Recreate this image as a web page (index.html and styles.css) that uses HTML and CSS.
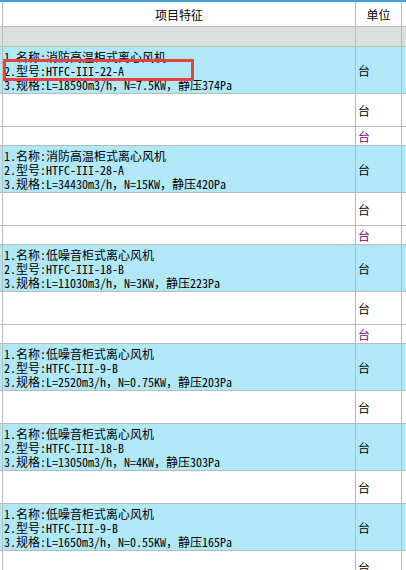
FILE: index.html
```html
<!DOCTYPE html>
<html lang="zh-CN">
<head>
<meta charset="utf-8">
<link rel="stylesheet" href="styles.css">
</head>
<body>
<div class="sheet">
  <div class="topbar"></div>
  <div class="row head">
    <div class="c1 center">项目特征</div>
    <div class="c2 center">单位</div>
  </div>
  <div class="row filter">
    <div class="c1"></div>
    <div class="c2"></div>
  </div>

  <div class="row item">
    <div class="c1 desc">
      <div class="line">1.名称:消防高温柜式离心风机</div>
      <div class="line mark">2.型号:HTFC-III-22-A</div>
      <div class="line">3.规格:L=18590m3/h，N=7.5KW，静压374Pa</div>
    </div>
    <div class="c2">台</div>
  </div>
  <div class="row sub"><div class="c1"></div><div class="c2">台</div></div>
  <div class="row small"><div class="c1"></div><div class="c2 purple">台</div></div>

  <div class="row item">
    <div class="c1 desc">
      <div class="line">1.名称:消防高温柜式离心风机</div>
      <div class="line">2.型号:HTFC-III-28-A</div>
      <div class="line">3.规格:L=34430m3/h，N=15KW，静压420Pa</div>
    </div>
    <div class="c2">台</div>
  </div>
  <div class="row sub"><div class="c1"></div><div class="c2">台</div></div>
  <div class="row small"><div class="c1"></div><div class="c2 purple">台</div></div>

  <div class="row item">
    <div class="c1 desc">
      <div class="line">1.名称:低噪音柜式离心风机</div>
      <div class="line">2.型号:HTFC-III-18-B</div>
      <div class="line">3.规格:L=11030m3/h，N=3KW，静压223Pa</div>
    </div>
    <div class="c2">台</div>
  </div>
  <div class="row sub"><div class="c1"></div><div class="c2">台</div></div>
  <div class="row small"><div class="c1"></div><div class="c2 purple">台</div></div>

  <div class="row item">
    <div class="c1 desc">
      <div class="line">1.名称:低噪音柜式离心风机</div>
      <div class="line">2.型号:HTFC-III-9-B</div>
      <div class="line">3.规格:L=2520m3/h，N=0.75KW，静压203Pa</div>
    </div>
    <div class="c2">台</div>
  </div>
  <div class="row sub"><div class="c1"></div><div class="c2">台</div></div>

  <div class="row item">
    <div class="c1 desc">
      <div class="line">1.名称:低噪音柜式离心风机</div>
      <div class="line">2.型号:HTFC-III-18-B</div>
      <div class="line">3.规格:L=13050m3/h，N=4KW，静压303Pa</div>
    </div>
    <div class="c2">台</div>
  </div>
  <div class="row sub"><div class="c1"></div><div class="c2">台</div></div>

  <div class="row item">
    <div class="c1 desc">
      <div class="line">1.名称:低噪音柜式离心风机</div>
      <div class="line">2.型号:HTFC-III-9-B</div>
      <div class="line">3.规格:L=1650m3/h，N=0.55KW，静压165Pa</div>
    </div>
    <div class="c2">台</div>
  </div>
  <div class="row sub"><div class="c1"></div><div class="c2">台</div></div>
</div>
</body>
</html>
```

FILE: styles.css
```css
html, body {
  margin: 0;
  padding: 0;
  background: #ffffff;
}
body {
  width: 406px;
  height: 570px;
  overflow: hidden;
  font-family: "Noto Sans Mono CJK SC", "Noto Sans CJK SC", monospace;
  font-size: 12px;
  color: #000000;
}
.sheet {
  display: flex;
  flex-direction: column;
}
.topbar {
  height: 2px;
  background: #3fa2da;
}
.row {
  display: grid;
  grid-template-columns: 353px 47px;
  padding-left: 2px;
  border-bottom: 1px solid #b9b9b9;
  background: #ffffff;
}
.c1 {
  border-left: 1px solid #b9b9b9;
  display: flex;
  align-items: center;
  padding-left: 1px;
}
.c2 {
  border-left: 1px solid #b9b9b9;
  border-right: 1px solid #b9b9b9;
  display: flex;
  align-items: center;
  padding-left: 2px;
}
.center {
  justify-content: center;
  padding-left: 0;
  font-family: "Noto Sans CJK SC", sans-serif;
}
.head { height: 24px; }
.filter { height: 19px; background: #d8e1de; }
.item { height: 46px; background: #b0e8f8; }
.sub { height: 32px; }
.small { height: 18px; }
.desc {
  flex-direction: column;
  align-items: flex-start;
  justify-content: center;
  padding-top: 2px;
}
.line {
  line-height: 14px;
  height: 14px;
  white-space: nowrap;
}
.mark {
  position: relative;
}
.mark::after {
  content: "";
  position: absolute;
  left: -1px;
  top: -5px;
  width: 185px;
  height: 16px;
  border: 3px solid #e8403c;
}
.purple { color: #800080; }
```
